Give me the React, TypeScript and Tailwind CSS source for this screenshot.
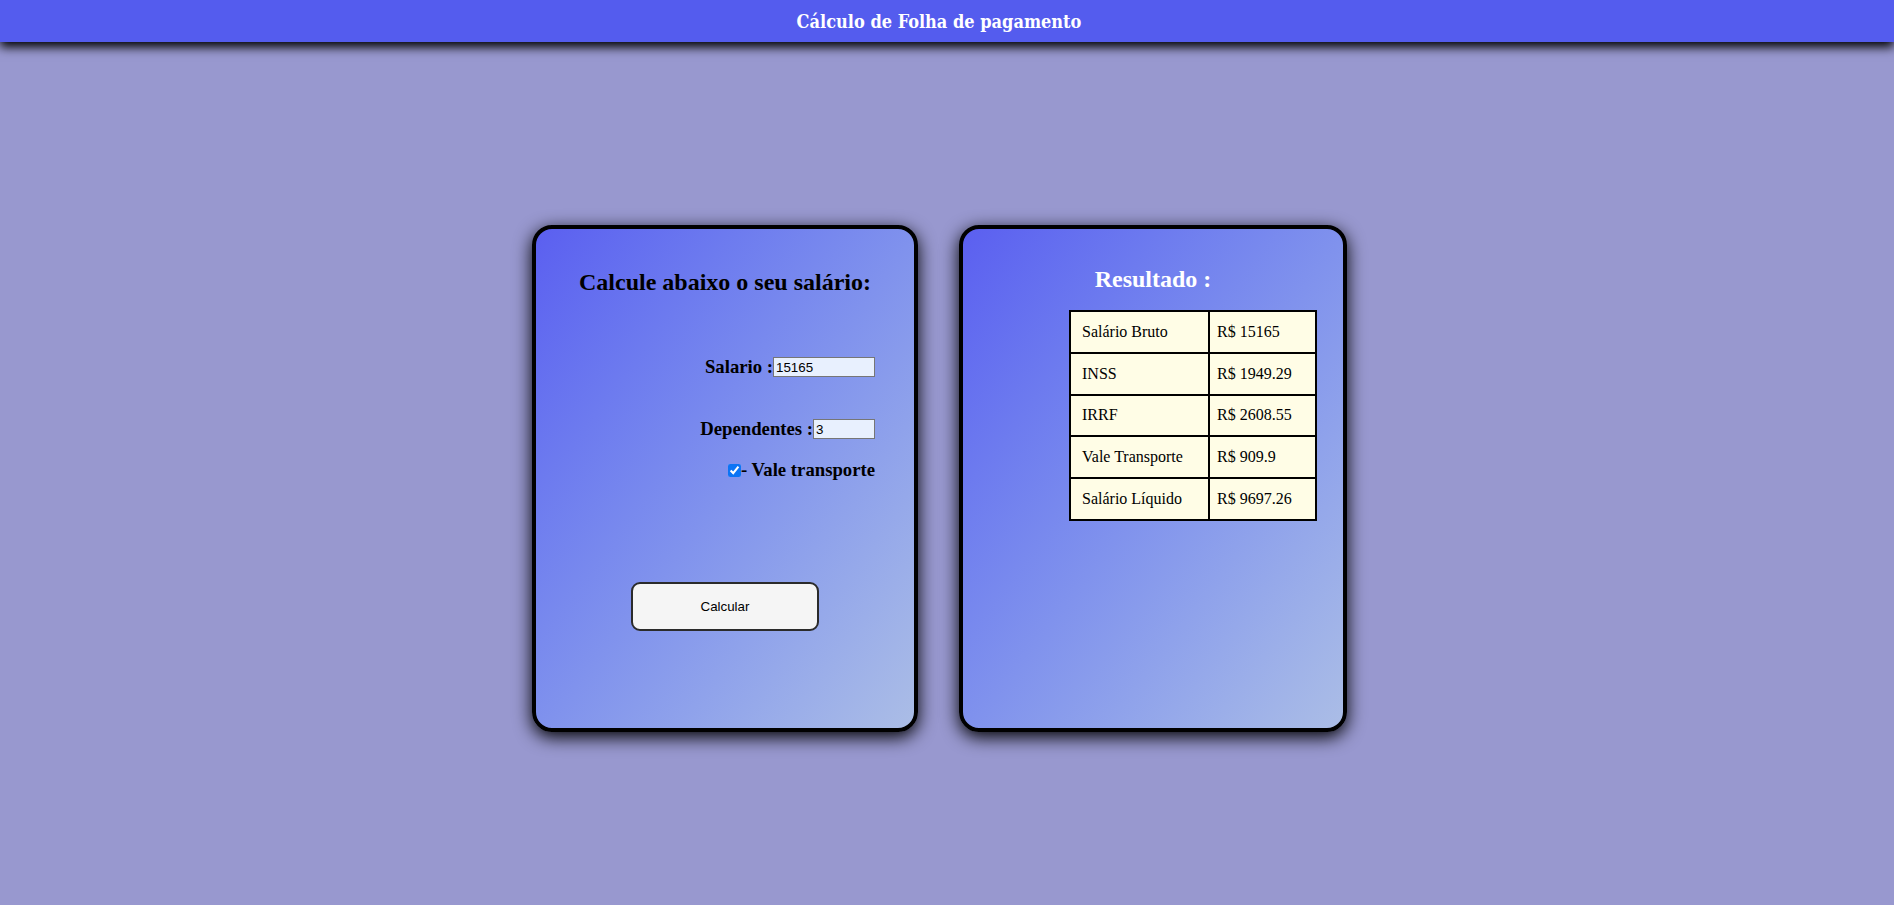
import React from "react";

const ROWS: [string, string][] = [
  ["Salário Bruto", "R$ 15165"],
  ["INSS", "R$ 1949.29"],
  ["IRRF", "R$ 2608.55"],
  ["Vale Transporte", "R$ 909.9"],
  ["Salário Líquido", "R$ 9697.26"],
];

const serif = "font-['Liberation_Serif','Times_New_Roman',serif]";
const sans = "font-['Liberation_Sans',Arial,sans-serif]";

function FormCard() {
  return (
    <div className="w-[386px] h-[507px] rounded-[20px] border-4 border-black bg-linear-to-br from-[#5b5ff0] to-[#abbde6] shadow-[0_5px_18px_#000] flex flex-col">
      <h2 className={`${serif} mt-[39px] text-center text-[24px] leading-[28px] font-bold text-black`}>
        Calcule abaixo o seu salário:
      </h2>

      <div className={`${serif} flex flex-col items-end pr-[39px] text-[18.72px] font-bold text-black`}>
        <div className="mt-[61px] h-[20px] flex items-center">
          <span className="leading-[22px]">Salario :</span>
          <input
            defaultValue="15165"
            className={`${sans} w-[102px] h-[20px] border border-[#767676] bg-[#e8f0fe] px-[2px] text-[13.33px] font-normal text-black`}
          />
        </div>
        <div className="mt-[42px] h-[20px] flex items-center">
          <span className="leading-[22px]">Dependentes :</span>
          <input
            defaultValue="3"
            className={`${sans} w-[62px] h-[20px] border border-[#767676] bg-[#e8f0fe] px-[2px] text-[13.33px] font-normal text-black`}
          />
        </div>
        <label className="mt-[24px] h-[14px] flex items-center">
          <input type="checkbox" defaultChecked className="m-0 w-[13px] h-[13px] accent-[#0b74f5]" />
          <span className="leading-[22px]">- Vale transporte</span>
        </label>
      </div>

      <div className="mt-[105px] flex justify-center">
        <button
          className={`${sans} w-[188px] h-[49px] rounded-[9px] border-2 border-[#2b2b2b] bg-[#f5f5f5] text-[13.33px] text-black`}
        >
          Calcular
        </button>
      </div>
    </div>
  );
}

function ResultCard() {
  return (
    <div className="w-[388px] h-[507px] rounded-[20px] border-4 border-black bg-linear-to-br from-[#5b5ff0] to-[#abbde6] shadow-[0_5px_18px_#000] flex flex-col">
      <h2 className={`${serif} mt-[36px] text-center text-[24px] leading-[28px] font-bold text-white`}>
        Resultado :
      </h2>
      <div className="mt-[17px] flex justify-end pr-[26px]">
        <table className={`${serif} w-[248px] border-collapse border-2 border-black text-[16px] text-black`}>
          <tbody>
            {ROWS.map(([k, v]) => (
              <tr key={k} className="h-[41.8px]">
                <td className="w-[139px] border-2 border-black bg-[#fffde6] pl-[11px] align-middle">{k}</td>
                <td className="border-2 border-black bg-[#fffde6] pl-[7px] align-middle">{v}</td>
              </tr>
            ))}
          </tbody>
        </table>
      </div>
    </div>
  );
}

export default function App() {
  return (
    <div className="min-h-screen bg-[#9898cf]">
      <header className="relative z-10 h-[42px] pr-[16px] bg-[#545cee] shadow-[0_5px_10px_#000] flex items-center justify-center">
        <h1 className="font-['DejaVu_Serif_Condensed','DejaVu_Serif',serif] text-[18px] font-bold text-white">
          Cálculo de Folha de pagamento
        </h1>
      </header>
      <main className="pt-[183px] pr-[15px] flex justify-center gap-[41px]">
        <FormCard />
        <ResultCard />
      </main>
    </div>
  );
}
